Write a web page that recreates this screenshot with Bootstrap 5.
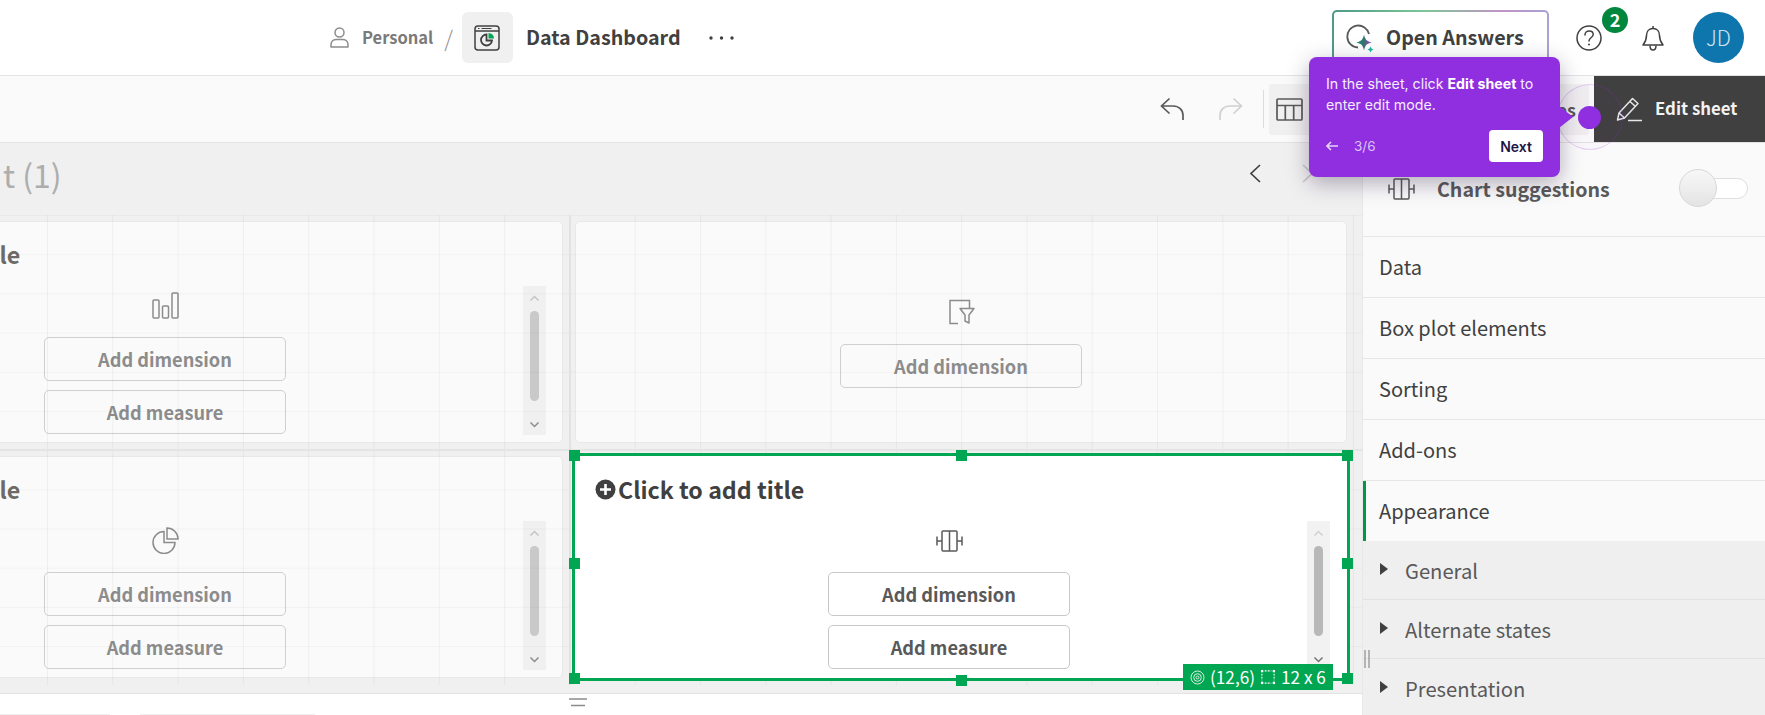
<!DOCTYPE html>
<html lang="en">
<head>
<meta charset="utf-8">
<title>Data Dashboard</title>
<link href="https://cdn.jsdelivr.net/npm/bootstrap@5.3.0/dist/css/bootstrap.min.css" rel="stylesheet">
<style>
html,body{margin:0;height:715px;overflow:hidden;background:#fff}
body{width:1765px;position:relative;font-family:"Noto Sans CJK JP","Noto Sans",sans-serif;color:#404040}
svg{flex:none}
.topbar{height:76px;border-bottom:1.5px solid #e3e3e3;background:#fff}
.crumbs{padding-left:330px;flex:1}
.person-txt{font-size:16.5px;font-weight:700;color:#7a7a7a;margin-left:13px}
.slash{font-size:22px;color:#8c8c8c;font-weight:300;margin:0 9px 0 11px}
.app-tile{width:51px;height:51px;border-radius:6px;background:#f0f0f0}
.app-name{font-size:19.7px;font-weight:700;color:#404040;margin:-2px 0 0 13px}
.dots{margin-left:28px}
.answers{width:217px;height:56px;align-self:center;border:2px solid transparent;border-radius:5px;background:linear-gradient(#fff,#fff) padding-box,linear-gradient(90deg,#4d9a88,#7cc796 42%,#c193c6 78%,#a9a2d2) border-box;padding:0 0 0 11px}
.answers span{font-size:19.7px;font-weight:700;color:#404040;margin:-2px 0 0 11px}
.right-tools{padding-right:21px}
.help-wrap{width:26px;margin-left:27px;position:relative}
.count{position:absolute;left:26px;top:-18px;width:26px;height:26px;border-radius:50%;background:#00873d;color:#fff;font-size:18px;font-weight:700;line-height:24px;text-align:center}
.bell{margin-left:40px}
.avatar{width:51px;height:51px;border-radius:50%;background:#0f75ad;color:#cfe5f2;font-size:21px;font-weight:300;margin-left:29px}
.toolsbar{height:67px;background:#fafafa;border-bottom:1.5px solid #e3e3e3}
.t-gap{margin-left:33px}
.t-sep{width:1px;height:38px;background:#dcdcdc;margin-left:20px}
.t-tile{width:320px;height:51px;margin-left:5px;background:#f0f0f0;border-radius:3px;padding:0 13px 0 7px;font-size:18px;font-weight:700;color:#595959}
.edit-btn{width:171px;height:66px;margin-left:5px;background:#404040;color:#f2f2f2;font-size:16.8px;font-weight:700;padding-left:22px;gap:12px}
.work{height:572px}
.stage{width:1362px;flex:none;background:#f0f0f0;overflow:hidden}
.sheet-head{height:72px;padding-right:48px;padding-bottom:11px}
.sheet-name{font-size:32px;color:#adadad;font-weight:400;margin-left:3px;line-height:1}
.nav-next{margin-left:41px}
.board{height:478px;position:relative;overflow:hidden}
.lines{position:absolute;left:0;top:0;right:0;height:470px;z-index:1;pointer-events:none;
background-image:linear-gradient(90deg,transparent 569px,#e2e2e2 569px,#e2e2e2 571px,transparent 571px),linear-gradient(transparent 234px,#e4e4e4 234px,#e4e4e4 236px,transparent 236px),linear-gradient(90deg,rgba(0,0,0,.045) 1px,transparent 1px),linear-gradient(rgba(0,0,0,.03) 1px,transparent 1px);
background-size:100% 100%,100% 100%,65.3px 100%,100% 39.2px;background-position:0 0,0 0,47px 0,0 0}
.tiles{display:grid;grid-template-columns:772px 772px;grid-template-rows:222px 222px;gap:13px 12px;margin:6px 0 0 -209px;width:1556px}
.tile{position:relative;background:#fafafa;border:1px solid #e8e8e8;border-radius:5px}
.tile-on{background:#fff;outline:3px solid #00a651;outline-offset:0;border-color:#fff;border-radius:0;z-index:2}
.tile-title{position:absolute;left:19px;top:17px;font-size:23.2px;font-weight:700;color:#6e6a66;line-height:30px;gap:2px}
.tile-on .tile-title{color:#404040}
.tile-main{width:242px;margin-left:252px;padding-top:70px;gap:8.500px}
.tile-icon{height:27px;margin-bottom:9px;line-height:0}
.add-btn{width:242px;height:44.5px;padding:0;border:1px solid #cfcfcf;border-radius:5px;background:transparent;font-size:18.2px;font-weight:700;color:#8c8c8c;line-height:1}
.tile-on .add-btn{color:#595959;border-color:#c8c8c8}
.lone{padding-top:77px;margin-left:264px}
.scroller{position:absolute;left:731px;top:64px;width:23px;height:149px;background:#f0f0f0}
.thumb{position:absolute;left:7px;top:25px;width:9px;height:90px;border-radius:5px;background:#c9c9c9}
.tile-on .thumb{background:#b8b8b8}
.tile-on .scroller{background:#f2f2f2}
.up{position:absolute;left:6px;top:9px;line-height:0}
.down{position:absolute;left:6px;bottom:7px;line-height:0}
.grip{position:absolute;width:11px;height:11px;background:#00a651;z-index:3}
.gtag{position:absolute;right:13px;bottom:-13px;height:26px;width:150px;background:#00a651;color:#fff;font-size:17.2px;line-height:1;padding-left:7px;gap:5px;z-index:4;white-space:nowrap}
.foot{height:22px;border-top:1.5px solid #e3e3e3;background:#fff;position:relative}
.foot-tab{height:1px;background:#efefef}
.foot-tab-a{width:110px}
.foot-tab-b{width:175px;margin-left:30px}
.foot-bars{position:absolute;left:569px;top:4px;line-height:0}
.side{width:403px;flex:none;background:#fafafa;border-left:1.5px solid #e8e8e8;position:relative;overflow:hidden}
.suggest{flex:none;height:94px;padding:0 17px 2px 25px;border-bottom:1.5px solid #e6e6e6;font-size:19.6px;font-weight:700;color:#595959}
.suggest b{font-weight:700;margin-left:22px;flex:1}
.switch-track{width:68px;height:21px;border:1.5px solid #dedede;border-radius:11px;background:#fff;position:relative}
.switch-knob{position:absolute;left:-2px;top:-10px;width:38px;height:38px;border-radius:50%;border:1px solid #d8d8d8;background:linear-gradient(#f7f7f7,#e4e4e4)}
.rowline{flex:none;height:61px;padding-left:16px;border-bottom:1.5px solid #e6e6e6;font-size:20px;color:#404040}
.rowline-on{height:60px;border-bottom:0;box-shadow:inset 3px 0 0 #009845}
.subline{flex:none;height:59px;background:#efefef;padding:3px 0 0 17px;border-bottom:1.5px solid #e2e2e2;font-size:20.2px;color:#595959;gap:17px}
.subline:last-child{border-bottom:0}
.tri{width:0;height:0;border-left:8px solid #404040;border-top:6px solid transparent;border-bottom:6px solid transparent;margin-top:-5px}
.side-grip{position:absolute;left:1px;top:507px;line-height:0}
.tour{position:absolute;left:1309px;top:57px;width:251px;height:120px;background:#8f2fe0;border-radius:8px;color:#fff;box-shadow:0 6px 22px rgba(40,20,60,.35);font-family:Inter,"Open Sans",sans-serif;padding:16px 17px 0 17px;z-index:20}
.tour::after{content:"";position:absolute;left:250px;top:49px;width:0;height:0;border-left:14px solid #8f2fe0;border-top:11px solid transparent;border-bottom:11px solid transparent}
.tour-copy{font-size:14.2px;line-height:21px;margin:0;height:57px;color:#f5ecfc;white-space:nowrap}
.tour-copy b{font-weight:700;color:#fff}
.tour-step{font-size:13.5px;color:#dcc3f5;gap:16px}
.tour-next{width:54px;height:32px;padding:0;background:#fff;border:0;border-radius:4px;color:#1c1645;font-size:14px;font-weight:600}
.beacon{position:absolute;left:1578px;top:106px;width:23px;height:23px;border-radius:50%;background:#8f2fe0;z-index:21}
.halo{position:absolute;left:1557px;top:84px;width:66px;height:66px;border-radius:50%;border:1px solid rgba(143,47,224,.2);background:rgba(143,47,224,.02);z-index:19}
</style>
</head>
<body>
<header class="topbar d-flex align-items-center">
  <div class="crumbs d-flex align-items-center">
    <svg width="19" height="21" viewBox="0 0 19 21" fill="none" stroke="#8c8c8c" stroke-width="1.5"><circle cx="9.5" cy="5.5" r="4.5"/><path d="M1 20v-2.5C1 14 4 12.5 6.5 12.500h6C15 12.500 18 14 18 17.500V20z" stroke-linejoin="round"/></svg>
    <span class="person-txt">Personal</span>
    <span class="slash">/</span>
    <div class="app-tile d-flex align-items-center justify-content-center">
      <svg width="26" height="26" viewBox="0 0 26 26" fill="none" stroke="#404040" stroke-width="1.5"><rect x="1" y="1" width="24" height="24" rx="3"/><path d="M1 6h24" /><path d="M4 3.500h1.500M7.500 3.500h10" stroke-width="1"/><path d="M12.500 9.500a5.500 5.500 0 1 0 5.500 6h-5.500z" stroke-width="1.800"/><path d="M14.500 8v5.500H20A5.500 5.500 0 0 0 14.500 8z" fill="#00a651" stroke="none"/></svg>
    </div>
    <span class="app-name">Data Dashboard</span>
    <svg class="dots" width="25" height="4" viewBox="0 0 25 4" fill="#404040"><circle cx="2" cy="2" r="1.700"/><circle cx="12.500" cy="2" r="1.700"/><circle cx="23" cy="2" r="1.700"/></svg>
  </div>
  <div class="right-tools d-flex align-items-center">
    <div class="answers d-flex align-items-center">
      <svg width="30" height="30" viewBox="0 0 30 30" fill="none"><defs><linearGradient id="spk" x1="0" y1="0" x2="1" y2="0"><stop offset="0" stop-color="#1f8a78"/><stop offset=".55" stop-color="#3d6f70"/><stop offset="1" stop-color="#8a52b8"/></linearGradient></defs><path d="M13 24.500A11 11 0 1 1 24 11" stroke="#595959" stroke-width="1.800"/><path d="M19 14.500c.8 2.800 2.200 4.200 5 5-2.800.8-4.200 2.200-5 5-.8-2.800-2.200-4.200-5-5 2.800-.8 4.200-2.200 5-5z" fill="url(#spk)" stroke="url(#spk)" stroke-width="1.500"/><path d="M25.500 23.500l1 2 2 1-2 1-1 2-1-2-2-1 2-1z" fill="#19b8a0"/></svg>
      <span>Open Answers</span>
    </div>
    <div class="help-wrap d-flex align-items-center">
      <svg width="26" height="26" viewBox="0 0 26 26" fill="none" stroke="#404040" stroke-width="1.500"><circle cx="13" cy="13" r="12"/><path d="M9 10c0-2.500 2-4 4.200-4 2.300 0 4 1.500 4 3.500 0 3-4.200 3-4.200 6.500" stroke-linecap="round"/><circle cx="13" cy="19.500" r="1" fill="#404040" stroke="none"/></svg>
      <span class="count">2</span>
    </div>
    <svg class="bell" width="22" height="26" viewBox="0 0 22 26" fill="none" stroke="#404040" stroke-width="1.500" stroke-linejoin="round"><path d="M11 3.500c-4 0-6.500 3-6.500 7 0 5-1.500 7-3.500 9.500h20c-2-2.500-3.500-4.500-3.500-9.500 0-4-2.500-7-6.500-7z"/><path d="M11 1v2.500M8 20.500c0 3 1.500 4.500 3 4.500s3-1.500 3-4.500"/></svg>
    <div class="avatar d-flex align-items-center justify-content-center">JD</div>
  </div>
</header>

<div class="toolsbar d-flex align-items-center justify-content-end">
  <svg width="25" height="24" viewBox="0 0 25 24" fill="none" stroke="#595959" stroke-width="1.700"><path d="M9.500 1.500L1.500 9l8 7.500M1.500 9H13c6 0 10 4 10 9.500V23"/></svg>
  <svg class="t-gap" width="25" height="24" viewBox="0 0 25 24" fill="none" stroke="#d0d0d0" stroke-width="1.700"><path d="M15.500 1.500l8 7.500-8 7.500M23.500 9H12C6 9 2 13 2 18.500V23"/></svg>
  <div class="t-sep"></div>
  <div class="t-tile d-flex align-items-center justify-content-between">
    <svg width="27" height="23" viewBox="0 0 27 23" fill="none" stroke="#595959" stroke-width="1.700"><rect x="1" y="1" width="25" height="21" rx="1"/><path d="M1 7.500h25M9.300 7.500V22M17.700 7.500V22"/></svg>
    <span>Properties</span>
  </div>
  <div class="edit-btn d-flex align-items-center">
    <svg width="27" height="26" viewBox="0 0 27 26" fill="none" stroke="#e6e6e6" stroke-width="1.500" stroke-linejoin="round"><path d="M1.500 24l1.500-7L16.500 2.500l5.500 5L8.500 22z"/><path d="M3 17l5.500 5M14 5.500l5.500 5M12 24.500h14"/></svg>
    <span>Edit sheet</span>
  </div>
</div>

<main class="work d-flex">
  <section class="stage d-flex flex-column">
    <div class="sheet-head d-flex align-items-center justify-content-between">
      <span class="sheet-name">t (1)</span>
      <div class="d-flex align-items-center">
        <svg width="12" height="19" viewBox="0 0 12 19" fill="none" stroke="#404040" stroke-width="1.700"><path d="M11 1L2 9.500l9 8.500"/></svg>
        <svg class="nav-next" width="12" height="19" viewBox="0 0 12 19" fill="none" stroke="#c8c8c8" stroke-width="1.700"><path d="M1 1l9 8.500L1 18"/></svg>
      </div>
    </div>
    <div class="board flex-grow-1">
      <div class="lines"></div>
      <div class="tiles">
        <div class="tile">
          <div class="tile-title d-flex align-items-center"><svg width="21" height="21" viewBox="0 0 21 21"><circle cx="10.500" cy="10.500" r="10" fill="#6e6a66"/><path d="M10.500 5v11M5 10.500h11" stroke="#fafafa" stroke-width="2.600"/></svg><span>Click to add title</span></div>
          <div class="tile-main d-flex flex-column align-items-center">
            <div class="tile-icon"><svg width="27" height="27" viewBox="0 0 27 27" fill="none" stroke="#8c8c8c" stroke-width="1.500"><rect x="1" y="8" width="6" height="18" rx="1"/><rect x="10.500" y="14" width="6" height="12" rx="1"/><rect x="20" y="1" width="6" height="25" rx="1"/></svg></div>
            <button class="btn add-btn" type="button">Add dimension</button>
            <button class="btn add-btn" type="button">Add measure</button>
          </div>
          <div class="scroller"><span class="up"><svg width="11" height="7" viewBox="0 0 11 7" fill="none" stroke="#c4c4c4" stroke-width="1.500"><path d="M1.500 5.500l4-4 4 4"/></svg></span><span class="thumb"></span><span class="down"><svg width="11" height="7" viewBox="0 0 11 7" fill="none" stroke="#8c8c8c" stroke-width="1.500"><path d="M1.500 1.500l4 4 4-4"/></svg></span></div>
        </div>
        <div class="tile">
          <div class="tile-main lone d-flex flex-column align-items-center">
            <div class="tile-icon"><svg width="27" height="26" viewBox="0 0 27 26" fill="none" stroke="#8c8c8c" stroke-width="1.500"><path d="M10 24.500H2V1.500h19.500V9"/><path d="M12 9.500h14L21 16v8l-4-2v-6z" stroke-linejoin="round"/></svg></div>
            <button class="btn add-btn" type="button">Add dimension</button>
          </div>
        </div>
        <div class="tile">
          <div class="tile-title d-flex align-items-center"><svg width="21" height="21" viewBox="0 0 21 21"><circle cx="10.500" cy="10.500" r="10" fill="#6e6a66"/><path d="M10.500 5v11M5 10.500h11" stroke="#fafafa" stroke-width="2.600"/></svg><span>Click to add title</span></div>
          <div class="tile-main d-flex flex-column align-items-center">
            <div class="tile-icon"><svg width="27" height="27" viewBox="0 0 27 27" fill="none" stroke="#8c8c8c" stroke-width="1.500"><path d="M12 4.500a11 11 0 1 0 11 11H12z"/><path d="M15 1v11h11A11 11 0 0 0 15 1z"/></svg></div>
            <button class="btn add-btn" type="button">Add dimension</button>
            <button class="btn add-btn" type="button">Add measure</button>
          </div>
          <div class="scroller"><span class="up"><svg width="11" height="7" viewBox="0 0 11 7" fill="none" stroke="#c4c4c4" stroke-width="1.500"><path d="M1.500 5.500l4-4 4 4"/></svg></span><span class="thumb"></span><span class="down"><svg width="11" height="7" viewBox="0 0 11 7" fill="none" stroke="#8c8c8c" stroke-width="1.500"><path d="M1.500 1.500l4 4 4-4"/></svg></span></div>
        </div>
        <div class="tile tile-on">
          <div class="tile-title d-flex align-items-center"><svg width="21" height="21" viewBox="0 0 21 21"><circle cx="10.500" cy="10.500" r="10" fill="#404040"/><path d="M10.500 5v11M5 10.500h11" stroke="#fff" stroke-width="2.600"/></svg><span>Click to add title</span></div>
          <div class="tile-main d-flex flex-column align-items-center">
            <div class="tile-icon d-flex align-items-center"><svg width="27" height="22" viewBox="0 0 27 22" fill="none" stroke="#595959" stroke-width="1.500"><rect x="6" y="1" width="15" height="20" rx="1"/><path d="M13.500 1v20M1 6.500v9M1 11h5M26 6.500v9M21 11h5"/></svg></div>
            <button class="btn add-btn" type="button">Add dimension</button>
            <button class="btn add-btn" type="button">Add measure</button>
          </div>
          <div class="scroller"><span class="up"><svg width="11" height="7" viewBox="0 0 11 7" fill="none" stroke="#d0d0d0" stroke-width="1.500"><path d="M1.500 5.500l4-4 4 4"/></svg></span><span class="thumb"></span><span class="down"><svg width="11" height="7" viewBox="0 0 11 7" fill="none" stroke="#737373" stroke-width="1.500"><path d="M1.500 1.500l4 4 4-4"/></svg></span></div>
          <span class="grip" style="left:-7px;top:-7px"></span>
          <span class="grip" style="left:380px;top:-7px"></span>
          <span class="grip" style="left:766px;top:-7px"></span>
          <span class="grip" style="left:-7px;top:101px"></span>
          <span class="grip" style="left:766px;top:101px"></span>
          <span class="grip" style="left:-7px;top:216px"></span>
          <span class="grip" style="left:380px;top:218px"></span>
          <span class="grip" style="left:766px;top:216px"></span>
          <div class="gtag d-flex align-items-center">
            <svg width="15" height="15" viewBox="0 0 15 15" fill="none" stroke="#d5f2e2" stroke-width="1"><circle cx="7.500" cy="7.500" r="6.500"/><circle cx="7.500" cy="7.500" r="3.800"/><circle cx="7.500" cy="7.500" r="1.500"/></svg>
            <span>(12,6)</span>
            <svg width="16" height="16" viewBox="0 0 17 17" fill="#fff" stroke="none"><rect x="1" y="1" width="2.500" height="2.500"/><rect x="13.500" y="1" width="2.500" height="2.500"/><rect x="1" y="13.500" width="2.500" height="2.500"/><rect x="13.500" y="13.500" width="2.500" height="2.500"/><path d="M2 5v7M15 5v7M5 2h7M5 15h7" stroke="#fff" stroke-width="1.200" stroke-dasharray="2 1.200"/></svg>
            <span>12 x 6</span>
          </div>
        </div>
      </div>
    </div>
    <div class="foot d-flex align-items-end">
      <div class="foot-tab foot-tab-a"></div>
      <div class="foot-tab foot-tab-b"></div>
      <div class="foot-bars"><svg width="18" height="9" viewBox="0 0 18 9" stroke="#8c8c8c" stroke-width="1.400"><path d="M0 1h18M2 7.500h14"/></svg></div>
    </div>
  </section>
  <aside class="side d-flex flex-column">
    <div class="suggest d-flex align-items-center">
      <svg width="27" height="22" viewBox="0 0 27 22" fill="none" stroke="#595959" stroke-width="1.500"><rect x="6" y="1" width="15" height="20" rx="1"/><path d="M13.500 1v20M1 6.500v9M1 11h5M26 6.500v9M21 11h5"/></svg>
      <b>Chart suggestions</b>
      <div class="switch-track"><span class="switch-knob"></span></div>
    </div>
    <div class="rowline d-flex align-items-center">Data</div>
    <div class="rowline d-flex align-items-center">Box plot elements</div>
    <div class="rowline d-flex align-items-center">Sorting</div>
    <div class="rowline d-flex align-items-center">Add-ons</div>
    <div class="rowline rowline-on d-flex align-items-center">Appearance</div>
    <div class="subline d-flex align-items-center"><span class="tri"></span>General</div>
    <div class="subline d-flex align-items-center"><span class="tri"></span>Alternate states</div>
    <div class="subline d-flex align-items-center"><span class="tri"></span>Presentation</div>
    <div class="side-grip"><svg width="6" height="18" viewBox="0 0 6 18" stroke="#8c8c8c" stroke-width="1.200"><path d="M1 0v18M5 0v18"/></svg></div>
  </aside>
</main>

<div class="halo"></div>
<div class="tour d-flex flex-column">
  <p class="tour-copy">In the sheet, click <b>Edit sheet</b> to<br>enter edit mode.</p>
  <div class="d-flex align-items-center justify-content-between">
    <div class="tour-step d-flex align-items-center">
      <svg width="12" height="10" viewBox="0 0 12 10" fill="none" stroke="#e6d3f8" stroke-width="1.600"><path d="M5 1L1 5l4 4M1 5h11"/></svg>
      <span>3/6</span>
    </div>
    <button class="btn tour-next" type="button">Next</button>
  </div>
</div>
<div class="beacon"></div>
<script src="https://cdn.jsdelivr.net/npm/bootstrap@5.3.0/dist/js/bootstrap.bundle.min.js"></script>
</body>
</html>
